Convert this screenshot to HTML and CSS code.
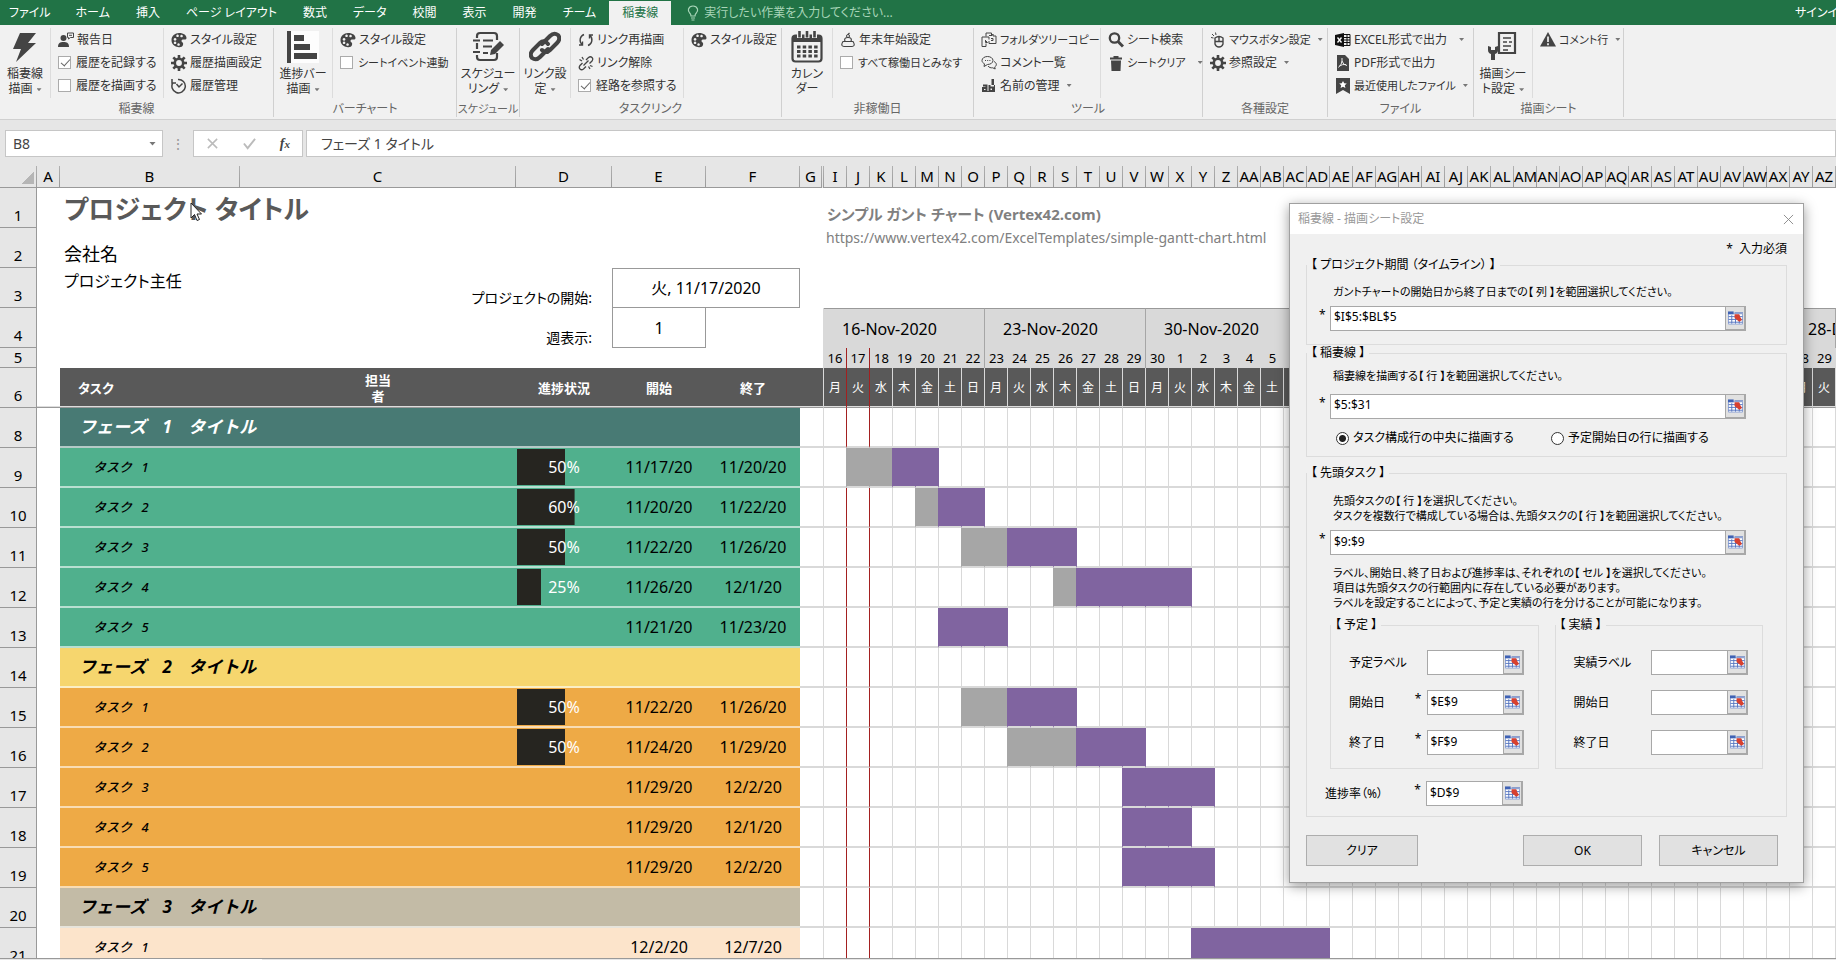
FILE: index.html
```html
<!DOCTYPE html>
<html lang="ja">
<head>
<meta charset="utf-8">
<title>稲妻線 - Excel</title>
<link rel="stylesheet" href="styles.css">
</head>
<body>
<svg class="sprite" aria-hidden="true">
  <symbol id="bolt" viewBox="0 0 32 32"><path d="M11 2h16l-8 10h8L7 31l5-13H4z" fill="#444"/></symbol>
  <symbol id="person" viewBox="0 0 16 16"><circle cx="5.500" cy="6" r="3" fill="#444"/><path d="M0 15c0-4 2-5 5.500-5s5.500 1 5.500 5z" fill="#444"/><path d="M9.500 1h6v4.500h-3L10.500 7V5.500h-1zM11 3.300h3" fill="none" stroke="#444"/></symbol>
  <symbol id="palette" viewBox="0 0 16 16"><path fill-rule="evenodd" d="M8 1c5 0 7.500 2.500 7.500 5 0 2-2 1.500-3.500 1.500S10 9 11 10s1.500 1 1 3-3 2.500-5 2C3 14.500.5 12 .5 8S4 1 8 1zM4 6a1.400 1.400 0 1 0 .1 0zm2.500-3.500a1.300 1.300 0 1 0 .1 0zm4 .2a1.300 1.300 0 1 0 .1 0zM4 9.500a1.300 1.300 0 1 0 .1 0zm3.500 1.700a1.300 1.300 0 1 0 .1 0z" fill="#444"/></symbol>
  <symbol id="gear" viewBox="0 0 16 16"><circle cx="8" cy="8" r="4.200" fill="none" stroke="#444" stroke-width="2.600"/><path d="M8 0v3M8 13v3M0 8h3M13 8h3M2.300 2.300l2.200 2.200M11.500 11.500l2.200 2.200M13.700 2.300l-2.200 2.200M4.500 11.500l-2.200 2.200" stroke="#444" stroke-width="2.600"/></symbol>
  <symbol id="history" viewBox="0 0 16 16"><path d="M2 4.500A6.700 6.700 0 1 0 7 1.500M1 1v4h4M5.500 6l2.500 3 3.500-3.500" fill="none" stroke="#444" stroke-width="1.500"/></symbol>
  <symbol id="bars" viewBox="0 0 32 32"><path d="M4 0h28v32H4z" fill="#fdfdfd"/><path d="M0 0h4v32H0zM7 4h10v6H7zM7 13h16v6H7zM7 22h23v6H7z" fill="#444"/></symbol>
  <symbol id="sheet" viewBox="0 0 32 32"><path d="M5 7V5q0-3 3-3h14q3 0 3 3v4M25 22v4q0 3-3 3H8q-3 0-3-3v-2M5 12v6M1 9.500h7M1 21h7M11 9.500h10M11 15.500h9M11 22h5" fill="none" stroke="#444" stroke-width="2.200"/><path d="M18 24l1-5 9-9 4 4-9 9z" fill="#444"/></symbol>
  <symbol id="link" viewBox="0 0 32 32"><g fill="none" stroke="#444" stroke-width="4" stroke-linecap="round" stroke-linejoin="round"><path d="M13 13l8-8q4-4 8-1 3 4-1 8l-7 7q-4 4-8 0"/><path d="M19 18l-8 8q-4 4-8 1-3-4 1-8l7-7q4-4 8 1"/></g></symbol>
  <symbol id="refresh" viewBox="0 0 16 16"><path d="M6 2.500A6 6 0 0 0 4 12.500M4.500 9.500v3.500H1M10 13.500A6 6 0 0 0 12 3.500M11.500 6.500V3H15" fill="none" stroke="#444" stroke-width="1.400"/></symbol>
  <symbol id="unlink" viewBox="0 0 16 16"><path d="M8 5l2.500-2.500q2-1.500 3.500 0t0 3.500L11.500 8.500M8 11.500L5.500 14q-2 1.500-3.500 0t0-3.500L4.500 8M5.500 10.500l5-5M4 2l1.500 2.500M1.500 4.500L4 6M12 14l-1.500-2.500M14.500 11.500L12 10.500" fill="none" stroke="#444" stroke-width="1.300"/></symbol>
  <symbol id="calendar" viewBox="0 0 32 32"><rect x="1.500" y="4.500" width="29" height="26" rx="3" fill="none" stroke="#444" stroke-width="2.200"/><path d="M1 5h30v6H1z" fill="#444"/><path d="M8.500 1v6M16 1v6M23.500 1v6" stroke="#f1f1f1" stroke-width="5"/><path d="M8.500 0v6.500M16 0v6.500M23.500 0v6.500" stroke="#444" stroke-width="2.600"/><path d="M6 16h21M6 20.500h21M6 25h21" stroke="#444" stroke-width="3" stroke-dasharray="3.500 2.200"/></symbol>
  <symbol id="mochi" viewBox="0 0 16 16"><circle cx="8" cy="4" r="1.500" fill="none" stroke="#444"/><path d="M8 2.500l1.500-1.500M5 9.500q-1.500-4 3-4t3 4zM3 9.500h10q3 4.500-1 5H4q-4-.5-1-5z" fill="none" stroke="#444" stroke-width="1.200"/></symbol>
  <symbol id="folders" viewBox="0 0 16 16"><path d="M5 4.500V1h5.500v2M10.500 1.500v2M5 11.500v3H1V5h7v2.500M8 3.500h3l1-1.500v2h3v7.500H8V9M4.500 8v2.500h2L5 9M10 6.500h2v2h-2" fill="none" stroke="#444"/></symbol>
  <symbol id="chat" viewBox="0 0 16 16"><path d="M6.500 1.500c3 0 5.500 1.700 5.500 4s-2.500 4-5.500 4L3 11.500l.5-2.700C2 8 1 7 1 5.500c0-2.300 2.500-4 5.500-4zM13 6.500c3 1.500 3 4 .7 5.500l.5 2-2.500-1.200c-2 .2-3.700-.3-4.700-1.800M4 5.500h1M6.200 5.500h1M8.400 5.500h1" fill="none" stroke="#444"/></symbol>
  <symbol id="names" viewBox="0 0 16 16"><path d="M2 7.500h3.500V13H2V10h3.500M8.500 7v6H12V9.500H8.500" fill="none" stroke="#444" stroke-width="2"/><path d="M10.500 1h2.500v6h-2.500zM1 14h13V7h-1v6H1z" fill="#444"/></symbol>
  <symbol id="search" viewBox="0 0 16 16"><circle cx="6.500" cy="6" r="4.700" fill="none" stroke="#444" stroke-width="2.300"/><path d="M10 9.500l5 5" stroke="#444" stroke-width="3"/></symbol>
  <symbol id="trash" viewBox="0 0 16 16"><path d="M2 2.500h3.500V1h5v1.500H14v2H2zM3 5.500h10L12.500 16h-9z" fill="#444"/></symbol>
  <symbol id="mouse" viewBox="0 0 16 16"><path d="M5 6q4-3 8 0v6q-1 3-4 3t-4-3zM5 9.500h8M9 4.500v5" fill="none" stroke="#444" stroke-width="1.400"/><path d="M1 5.500l2.500.5M2 2l2 2M5.500.5l.5 2.500" stroke="#444"/></symbol>
  <symbol id="xls" viewBox="0 0 16 16"><path d="M0 3l9-2v14l-9-2z" fill="#111"/><path d="M9 2.500h6v11H9M9 5.500h6M9 8h6M9 10.500h6M12 2.500v11" fill="none" stroke="#111"/><path d="M2.500 5.500l4 5M6.500 5.500l-4 5" stroke="#fff" stroke-width="1.300"/></symbol>
  <symbol id="pdf" viewBox="0 0 16 16"><path d="M2 0h8l4 4v12H2z" fill="#444"/><path d="M7 3v3q0 3-3.500 6.500M7 6q1 4 5 4.500M4.500 11q3-2 6.500-1.500" fill="none" stroke="#eee"/></symbol>
  <symbol id="recent" viewBox="0 0 16 16"><path d="M1 0h14v16l-7-4-7 4z" fill="#444"/><path d="M8 3l1.200 2.300 2.600.3-2 1.700.6 2.700L8 8.700 5.600 10l.6-2.700-2-1.700 2.600-.3z" fill="#fff"/></symbol>
  <symbol id="wrench" viewBox="0 0 32 32"><path d="M12 2h16v20H12z" fill="none" stroke="#444" stroke-width="2.200"/><path d="M16 7h8M16 11h4M22 11h3M16 15h8M16 19h5" stroke="#444" stroke-width="1.700"/><path d="M1 15v4q0 3 3 4v6h4v-6q3-1 3-4v-4l-3 1v3H4v-3z" fill="#444"/></symbol>
  <symbol id="warn" viewBox="0 0 16 16"><path d="M8 0l8 14.500H0z" fill="#444"/><path d="M8 4.500v5.500M8 11.300v1.900" stroke="#f1f1f1" stroke-width="1.700"/></symbol>
  <symbol id="bulb" viewBox="0 0 12 16"><path d="M4 11q0-2-1.500-3.300Q1 6 1.500 4 2.500 1 6 1t4.500 3q.5 2-1 3.700Q8 9 8 11zM4 13h4M4.500 15h3" fill="none" stroke="#a8d5b8" stroke-width="1.200"/></symbol>
  <symbol id="picker" viewBox="0 0 16 14"><path d="M.5 2.500h15v11H.5z" fill="#fff" stroke="#8fa3d4"/><path d="M.5 5.500h15M.5 8.500h15M.5 11.500h15M4 4v9M8 4v9M12 4v9M7 1.500h9" stroke="#5675c0"/><path d="M0 0h6v3H0z" fill="#3f62b5"/><path d="M7 3l5 0 1 3 2 3-3 2-5-4z" fill="#d8402f"/></symbol>
</svg>

<div class="app">
  <nav class="tabs">
    <button class="tab tab-file">ファイル</button><button class="tab">ホーム</button><button class="tab">挿入</button><button class="tab">ページ レイアウト</button><button class="tab">数式</button><button class="tab">データ</button><button class="tab">校閲</button><button class="tab">表示</button><button class="tab">開発</button><button class="tab">チーム</button><button class="tab active">稲妻線</button>
    <label class="tell"><svg class="bulb"><use href="#bulb"/></svg><input type="text" placeholder="実行したい作業を入力してください..."></label>
    <button class="signin">サインイン</button>
  </nav>

  <div class="ribbon">
    <section class="group g-line"><div class="tools">
      <button class="big"><svg><use href="#bolt"/></svg><span>稲妻線<br>描画<i class="dd"></i></span></button>
      <div class="stack w-a"><button class="item"><svg><use href="#person"/></svg>報告日</button><label class="item"><input type="checkbox" checked>履歴を記録する</label><label class="item"><input type="checkbox">履歴を描画する</label></div>
      <div class="stack"><button class="item"><svg><use href="#palette"/></svg>スタイル設定</button><button class="item"><svg><use href="#gear"/></svg>履歴描画設定</button><button class="item"><svg><use href="#history"/></svg>履歴管理</button></div>
    </div><h2>稲妻線</h2></section>
    <section class="group g-bar"><div class="tools">
      <button class="big wide"><svg><use href="#bars"/></svg><span>進捗バー<br>描画<i class="dd"></i></span></button>
      <div class="stack"><button class="item"><svg><use href="#palette"/></svg>スタイル設定</button><label class="item tight"><input type="checkbox">シートイベント連動</label></div>
    </div><h2>バーチャート</h2></section>
    <section class="group g-sched"><div class="tools">
      <button class="big only"><svg><use href="#sheet"/></svg><span>スケジュー<br>リング<i class="dd"></i></span></button>
    </div><h2 class="tight">スケジュール</h2></section>
    <section class="group g-link"><div class="tools">
      <button class="big"><svg><use href="#link"/></svg><span>リンク設<br>定<i class="dd"></i></span></button>
      <div class="stack w-a"><button class="item"><svg><use href="#refresh"/></svg>リンク再描画</button><button class="item"><svg><use href="#unlink"/></svg>リンク解除</button><label class="item"><input type="checkbox" checked>経路を参照する</label></div>
      <div class="stack"><button class="item"><svg><use href="#palette"/></svg>スタイル設定</button></div>
    </div><h2>タスクリンク</h2></section>
    <section class="group g-off"><div class="tools">
      <button class="big"><svg><use href="#calendar"/></svg><span>カレン<br>ダー</span></button>
      <div class="stack"><button class="item"><svg><use href="#mochi"/></svg>年末年始設定</button><label class="item tight"><input type="checkbox">すべて稼働日とみなす</label></div>
    </div><h2>非稼働日</h2></section>
    <section class="group g-tool"><div class="tools">
      <div class="stack w-b"><button class="item tight"><svg><use href="#folders"/></svg>フォルダツリーコピー</button><button class="item"><svg><use href="#chat"/></svg>コメント一覧</button><button class="item"><svg><use href="#names"/></svg>名前の管理<i class="dd"></i></button></div>
      <div class="stack"><button class="item"><svg><use href="#search"/></svg>シート検索</button><button class="item tight"><svg><use href="#trash"/></svg>シートクリア<i class="dd far"></i></button></div>
    </div><h2>ツール</h2></section>
    <section class="group g-conf"><div class="tools">
      <div class="stack"><button class="item tight"><svg><use href="#mouse"/></svg>マウスボタン設定<i class="dd"></i></button><button class="item"><svg><use href="#gear"/></svg>参照設定<i class="dd"></i></button></div>
    </div><h2>各種設定</h2></section>
    <section class="group g-file"><div class="tools">
      <div class="stack"><button class="item"><svg><use href="#xls"/></svg>EXCEL形式で出力<i class="dd far"></i></button><button class="item"><svg><use href="#pdf"/></svg>PDF形式で出力</button><button class="item tight"><svg><use href="#recent"/></svg>最近使用したファイル<i class="dd"></i></button></div>
    </div><h2>ファイル</h2></section>
    <section class="group g-draw"><div class="tools">
      <button class="big wide"><svg><use href="#wrench"/></svg><span>描画シー<br>ト設定<i class="dd"></i></span></button>
      <div class="stack"><button class="item tight"><svg><use href="#warn"/></svg>コメント行<i class="dd"></i></button></div>
    </div><h2>描画シート</h2></section>
  </div>

  <div class="formula">
    <div class="namebox"><input type="text" value="B8" aria-label="名前ボックス"><i class="dd"></i></div>
    <span class="grip">⋮</span>
    <div class="fxbox">
      <button aria-label="キャンセル"><svg viewBox="0 0 14 14"><path d="M2 2l10 10M12 2L2 12" fill="none" stroke="#bbb" stroke-width="1.600"/></svg></button>
      <button aria-label="入力"><svg viewBox="0 0 14 14"><path d="M1 7l4 5 8-10" fill="none" stroke="#bbb" stroke-width="2"/></svg></button>
      <button class="fx"><em>f</em><sub>x</sub></button>
    </div>
    <input class="fbar" type="text" value="フェーズ 1 タイトル" aria-label="数式バー">
  </div>

  <main class="sheet">
    <table>
      <colgroup id="cols"><col class="c-row"><col class="c-a"><col class="c-b"><col class="c-c"><col class="c-d"><col class="c-e"><col class="c-e"><col class="c-g"><col class="c-h"></colgroup>
      <thead><tr id="letters"><th class="corner"></th><th>A</th><th>B</th><th>C</th><th>D</th><th>E</th><th>F</th><th>G</th><th></th></tr></thead>
      <tbody id="rows">
        <tr><th>1</th><td></td><td colspan="7" class="title">プロジェクト タイトル</td><td colspan="44" class="credit">シンプル ガント チャート (Vertex42.com)</td></tr>
        <tr><th>2</th><td></td><td colspan="7" class="company">会社名</td><td colspan="44" class="url"><a href="https://www.vertex42.com/ExcelTemplates/simple-gantt-chart.html">https://www.vertex42.com/ExcelTemplates/simple-gantt-chart.html</a></td></tr>
        <tr><th>3</th><td></td><td class="lead">プロジェクト主任</td><td colspan="2" class="caption">プロジェクトの開始:</td><td colspan="2" class="box first">火, 11/17/2020</td><td colspan="46"></td></tr>
        <tr id="weeks"><th>4</th><td></td><td></td><td colspan="2" class="caption">週表示:</td><td class="box">1</td><td colspan="3"></td></tr>
        <tr id="dates" class="low"><th>5</th><td></td><td colspan="7"></td></tr>
        <tr id="days" class="head"><th>6</th><td class="blank"></td><td class="task-head">タスク</td><td>担当<br>者</td><td>進捗状況</td><td>開始</td><td>終了</td><td colspan="2"></td></tr>
      </tbody>
    </table>
    <svg class="cursor" viewBox="0 0 12 20"><path d="M1 1v15l3.500-3.500L7 18.500l2.500-1L7 12h4.500z" fill="#fff" stroke="#222"/></svg>
  </main>
  <footer class="strip"><span></span></footer>
</div>

<form class="dialog" role="dialog" aria-label="稲妻線 - 描画シート設定">
  <header>稲妻線 - 描画シート設定<button type="button" class="close" aria-label="閉じる"><svg viewBox="0 0 12 12"><path d="M1 1l10 10M11 1L1 11" stroke="#888"/></svg></button></header>
  <div class="body">
    <p class="note">*&nbsp; 入力必須</p>
    <fieldset class="fs1"><legend>【 プロジェクト期間 （タイムライン） 】</legend>
      <label for="p1">ガントチャートの開始日から終了日までの【 列 】を範囲選択してください。</label>
      <div class="line"><b>*</b><div class="ref"><input id="p1" type="text" value="$I$5:$BL$5"><button type="button" aria-label="範囲選択"><svg><use href="#picker"/></svg></button></div></div>
    </fieldset>
    <fieldset class="fs2"><legend>【 稲妻線 】</legend>
      <label for="p2">稲妻線を描画する【 行 】を範囲選択してください。</label>
      <div class="line"><b>*</b><div class="ref"><input id="p2" type="text" value="$5:$31"><button type="button" aria-label="範囲選択"><svg><use href="#picker"/></svg></button></div></div>
      <div class="radios"><label><input type="radio" name="pos" checked>タスク構成行の中央に描画する</label><label><input type="radio" name="pos">予定開始日の行に描画する</label></div>
    </fieldset>
    <fieldset class="fs3"><legend>【 先頭タスク 】</legend>
      <label for="p3">先頭タスクの【 行 】を選択してください。<br>タスクを複数行で構成している場合は、先頭タスクの【 行 】を範囲選択してください。</label>
      <div class="line"><b>*</b><div class="ref"><input id="p3" type="text" value="$9:$9"><button type="button" aria-label="範囲選択"><svg><use href="#picker"/></svg></button></div></div>
      <p class="help">ラベル、開始日、終了日および進捗率は、それぞれの【 セル 】を選択してください。<br>項目は先頭タスクの行範囲内に存在している必要があります。<br>ラベルを設定することによって、予定と実績の行を分けることが可能になります。</p>
      <div class="pair">
        <fieldset><legend>【 予定 】</legend>
          <div class="row"><label for="a1">予定ラベル</label><b></b><div class="ref"><input id="a1" type="text"><button type="button" aria-label="範囲選択"><svg><use href="#picker"/></svg></button></div></div>
          <div class="row"><label for="a2">開始日</label><b>*</b><div class="ref"><input id="a2" type="text" value="$E$9"><button type="button" aria-label="範囲選択"><svg><use href="#picker"/></svg></button></div></div>
          <div class="row"><label for="a3">終了日</label><b>*</b><div class="ref"><input id="a3" type="text" value="$F$9"><button type="button" aria-label="範囲選択"><svg><use href="#picker"/></svg></button></div></div>
        </fieldset>
        <fieldset><legend>【 実績 】</legend>
          <div class="row"><label for="b1">実績ラベル</label><b></b><div class="ref"><input id="b1" type="text"><button type="button" aria-label="範囲選択"><svg><use href="#picker"/></svg></button></div></div>
          <div class="row"><label for="b2">開始日</label><b></b><div class="ref"><input id="b2" type="text"><button type="button" aria-label="範囲選択"><svg><use href="#picker"/></svg></button></div></div>
          <div class="row"><label for="b3">終了日</label><b></b><div class="ref"><input id="b3" type="text"><button type="button" aria-label="範囲選択"><svg><use href="#picker"/></svg></button></div></div>
        </fieldset>
      </div>
      <div class="row rate"><label for="r1">進捗率（%）</label><b>*</b><div class="ref"><input id="r1" type="text" value="$D$9"><button type="button" aria-label="範囲選択"><svg><use href="#picker"/></svg></button></div></div>
    </fieldset>
    <div class="actions"><button type="button">クリア</button><button type="button" class="ok">OK</button><button type="button">キャンセル</button></div>
  </div>
</form>
<script src="sheet.js"></script>
</body>
</html>
```

FILE: styles.css
```css
* { box-sizing: border-box; }
body {
  margin: 0;
  font: 12px/16px "Noto Sans", "Noto Sans CJK JP", sans-serif;
  font-feature-settings: "palt";
  color: #000;
  overflow: hidden;
}
button, input { font: inherit; font-feature-settings: inherit; color: inherit; border: 0; background: none; padding: 0; margin: 0; }
.sprite { display: none; }
.app { display: flex; flex-direction: column; height: 100vh; overflow: hidden; background: #e6e6e6; }

/* Tabs */
.tabs { display: flex; height: 25px; flex: none; background: #217346; color: #fff; }
.tab { padding: 0 13px; white-space: nowrap; }
.tab-file { padding: 0 12px 0 9px; }
.tab.active { background: #f1f1f1; color: #217346; margin-top: 1px; }
.tell { display: flex; align-items: center; gap: 5px; margin-left: 16px; color: #a8d5b8; }
.bulb { width: 12px; height: 16px; }
.tell input { width: 260px; }
.tell input::placeholder { color: #a8d5b8; opacity: 1; }
.signin { margin-left: auto; width: 41px; overflow: hidden; text-align: left; white-space: nowrap; }

/* Ribbon */
.ribbon { display: flex; flex: none; background: #f1f1f1; border-bottom: 1px solid #d0d0d0; color: #333; padding: 3px 0 2px; }
.group { display: flex; flex-direction: column; flex: none; border-right: 1px solid #d0d0d0; }
.g-line { width: 274px; }
.g-bar { width: 183px; }
.g-sched { width: 63px; }
.g-link { width: 262px; }
.g-off { width: 192px; }
.g-tool { width: 229px; }
.g-conf { width: 125px; }
.g-file { width: 146px; }
.g-draw { width: 150px; }
.tools { display: flex; height: 70px; }
.group h2 { margin: 3px 0 0; font-size: 12px; line-height: 16px; font-weight: normal; text-align: center; color: #666; white-space: nowrap; }
.group h2.tight, .item.tight { font-size: 11px; }
.big { width: 50px; display: flex; flex-direction: column; align-items: center; gap: 3px; padding-top: 3px; line-height: 15px; white-space: nowrap; flex: none; }
.big.wide { width: 58px; }
.big.only { width: 62px; }
.big svg { width: 32px; height: 32px; flex: none; }
.stack { padding-left: 7px; }
.big + .stack, .stack + .stack { border-left: 1px solid #dcdcdc; }
.w-a { width: 113px; flex: none; }
.w-b { width: 126px; flex: none; }
.item { display: flex; align-items: center; gap: 3px; height: 23px; white-space: nowrap; }
.item svg { width: 16px; height: 16px; flex: none; }
.item input { appearance: none; width: 13px; height: 13px; flex: none; border: 1px solid #ababab; background: #fff; margin-right: 2px; }
.item input:checked::before { content: ""; display: block; width: 4px; height: 8px; margin: 0 0 0 4px; border: solid #666; border-width: 0 1px 1px 0; rotate: 42deg; }
.dd { display: inline-block; width: 5px; height: 3px; margin-left: 4px; background: #777; clip-path: polygon(0 0, 100% 0, 50% 100%); vertical-align: middle; }
.dd.far { margin-left: 9px; }

/* Formula bar */
.formula { display: flex; flex: none; align-items: stretch; height: 37px; padding: 10px 0 0 5px; color: #444; font-size: 14px; }
.namebox { display: flex; align-items: center; width: 158px; background: #fff; border: 1px solid #c6c6c6; padding: 0 6px 0 7px; }
.namebox input { flex: 1; min-width: 0; }
.namebox .dd { width: 7px; height: 4px; }
.grip { width: 30px; text-align: center; line-height: 27px; color: #999; }
.fxbox { display: flex; align-items: center; justify-content: space-around; width: 110px; background: #fff; border: 1px solid #c6c6c6; margin-right: 3px; }
.fxbox svg { width: 13px; height: 13px; display: block; }
.fx { font-family: "Liberation Serif", serif; font-weight: bold; line-height: 16px; }
.fx sub { font-size: 11px; font-style: italic; vertical-align: baseline; }
.fbar { flex: 1; background: #fff; border: 1px solid #c6c6c6; padding-left: 14px; }

/* Sheet */
.sheet { position: relative; flex: 1; min-height: 0; overflow: hidden; background: #fff; }
table { table-layout: fixed; width: 0; border-collapse: separate; border-spacing: 0; font-size: 16px; line-height: 20px; }
.c-row { width: 37px; }
.c-a { width: 23px; }
.c-b { width: 180px; }
.c-c { width: 276px; }
.c-d { width: 96px; }
.c-e { width: 94px; }
.c-g { width: 22px; }
.c-h { width: 2px; }
.c-day { width: 23px; }
th, td { padding: 0; white-space: nowrap; }
th { font-weight: normal; font-size: 15px; background: #e6e6e6; }
thead th { height: 31px; padding-top: 9px; line-height: 21px; border-bottom: 1px solid #999; border-right: 1px solid; border-image: linear-gradient(#e6e6e6 30%, #b0b0b0 32%, #999) 1; }
thead .corner { background: linear-gradient(135deg, #e6e6e6 50%, #b5b5b5 50%) 22px 15px / 12px 12px no-repeat #e6e6e6; }
tbody th { height: 40px; vertical-align: bottom; line-height: 24px; border-right: 1px solid #999; border-bottom: 1px solid #999; }
.low th { height: 20px; line-height: 19px; }
.title { padding: 3px 0 0 4px; font-size: 26px; line-height: 36px; font-weight: bold; color: #595959; vertical-align: top; }
.credit { font-size: 15px; font-weight: bold; color: #808080; padding: 12px 0 0 3px; }
.company { padding: 12px 0 0 4px; font-size: 18px; font-feature-settings: normal; }
.url { padding-left: 2px; vertical-align: top; font-size: 14px; }
.url a { color: #808080; text-decoration: none; }
.lead { padding-left: 4px; font-size: 16px; line-height: 26px; vertical-align: top; }
.caption { text-align: right; vertical-align: bottom; padding-right: 20px; font-size: 14px; }
.box { text-align: center; border: 1px solid #999; border-top: 0; background: #fff; }
.box.first { border-top: 1px solid #999; }
.week { background: #d9d9d9; border-top: 1px solid #999; border-right: 1px solid #a6a6a6; padding-left: 18px; overflow: hidden; }
.date { background: #d9d9d9; font-size: 13px; line-height: 18px; text-align: center; }
.date.sunday { border-right: 1px solid #a6a6a6; }
.head td { background: #595959; color: #fff; text-align: center; font-size: 13px; line-height: 16px; font-weight: bold; border-bottom: 1px solid #999; box-shadow: inset 0 -1px #ddd; }
.head td.blank { background: #fff; }
.head td.task-head { text-align: left; padding-left: 18px; }
.head td.day { font-weight: normal; font-size: 12px; border-right: 1px solid #d9d9d9; }
.g { border-right: 1px solid #d9d9d9; border-bottom: 2px solid #d9d9d9; }
.gap { border-bottom: 2px solid #d9d9d9; }
.edge { border-right: 1px solid #d9d9d9; }
.g.done { background: #a6a6a6; background-clip: padding-box; }
.g.todo { background: #8064a0; background-clip: padding-box; }
.r-red, .date.r-red, .head td.r-red { border-right: 1px solid #a32020; }
.g.r-done { border-right-color: #a6a6a6; }
.g.r-todo { border-right-color: #8064a0; }
.fill { border-bottom: 2px solid rgba(255, 255, 255, .6); text-align: center; }
.phase1 .fill { background-color: #487a74; color: #fff; }
.task1 .fill { background-color: #50b08d; }
.phase2 .fill { background-color: #f6d66e; }
.task2 .fill { background-color: #eeaa46; }
.phase3 .fill { background-color: #c3bba6; }
.task3 .fill { background-color: #fce4cb; }
.fill.name { text-align: left; padding-left: 33px; font-size: 13px; font-style: italic; font-weight: 500; font-feature-settings: normal; }
.fill.phase { text-align: left; padding-left: 19px; font-size: 17px; font-style: italic; font-weight: bold; font-feature-settings: normal; }
.name span { margin: 0 6px; }
.phase span { margin: 0 12px; }
.fill.pct { color: #fff; background-image: linear-gradient(#262520, #262520); background-position: 1px 1px; background-size: var(--done) 36px; background-repeat: no-repeat; }
.cursor { position: absolute; left: 190px; top: 45px; width: 12px; height: 20px; }
.strip { height: 2px; flex: none; border-top: 1px solid #999; background: #e6e6e6; padding-left: 100px; }
.strip span { display: block; width: 162px; height: 1px; background: #fff; }

/* Dialog */
.dialog { position: absolute; top: 203px; right: 32px; width: 515px; background: #f0f0f0; border: 1px solid #a0a0a0; box-shadow: 0 3px 12px rgba(0, 0, 0, .4); }
.dialog header { display: flex; align-items: center; justify-content: space-between; height: 30px; padding: 0 9px 0 8px; background: #fff; color: #999; }
.close svg { width: 11px; height: 11px; display: block; }
.body { padding: 7px 16px 16px; }
.body p { margin: 0; }
.note { text-align: right; }
fieldset { margin: 0; border: 1px solid #dcdcdc; min-width: 0; padding: 0; }
legend { padding: 0 4px; height: 16px; white-space: nowrap; }
.fs1 > label, .fs2 > label, .fs3 > label, .help { display: block; padding-left: 26px; font-size: 11px; white-space: nowrap; }
.fs1 { padding: 11px 40px 13px 0; }
.fs1 .line { margin-top: 6px; }
.fs2 { padding: 7px 40px 10px 0; }
.fs2 .line { margin-top: 10px; }
.fs3 { margin-top: 8px; padding: 12px 40px 10px 0; line-height: 15px; }
.fs3 .line { margin-top: 7px; }
.line { display: flex; padding-left: 12px; }
b { font-weight: normal; width: 11px; flex: none; line-height: 18px; }
.ref { display: flex; flex: 1; height: 25px; border: 1px solid #a8a8a8; background: #fff; }
.ref input { flex: 1; min-width: 0; padding: 0 3px 3px; outline: 0; }
.ref button { width: 20px; flex: none; display: grid; place-items: center; background: #e1e1e1; border: 1px solid #a8a8a8; border-width: 0 1px 1px 1px; }
.ref svg { width: 15px; height: 14px; }
.radios { display: flex; margin-top: 11px; padding-left: 29px; font-size: 12px; }
.radios label { display: flex; align-items: center; gap: 4px; flex: none; width: 215px; white-space: nowrap; }
.radios label + label { width: auto; }
.radios input { appearance: none; width: 13px; height: 13px; border: 1px solid #333; border-radius: 50%; background: #fff; flex: none; }
.radios input:checked { background: radial-gradient(circle, #222 3px, #fff 4px); }
.body .help { margin-top: 10px; }
.pair { display: grid; grid-template-columns: 1fr 1fr; gap: 16px; margin: 7px -17px 0 23px; }
.pair fieldset { padding: 17px 14px 13px 0; }
.pair .row { padding-left: 18px; }
.pair .row + .row { margin-top: 15px; }
.row { display: flex; }
.row label { flex: 1; line-height: 25px; white-space: nowrap; }
.row b { width: 17px; text-align: center; }
.row .ref { flex: 0 0 97px; min-width: 0; }
.rate { margin-top: 12px; padding-left: 18px; width: 216px; }
.actions { display: flex; gap: 17px; margin-top: 18px; padding-right: 9px; }
.actions button { width: 119px; height: 31px; background: #e1e1e1; border: 1px solid #adadad; }
.actions button:first-child { width: 112px; margin-right: auto; }
```

FILE: sheet.js
```js
const DAYS = 44;
const WEEKDAYS = ['月', '火', '水', '木', '金', '土', '日'];
const byId = (id) => document.getElementById(id);

function add(parent, tag, text, cls, span) {
  const el = document.createElement(tag);
  if (text) el.textContent = text;
  if (cls) el.className = cls;
  if (span) el.colSpan = span;
  parent.appendChild(el);
  return el;
}

function letter(n) {
  return n < 26 ? String.fromCharCode(65 + n) : 'A' + String.fromCharCode(65 + n - 26);
}

// Today is the second day of the chart; its cell is framed by two red lines.
const red = (i) => (i === 0 || i === 1 ? ' r-red' : '');

byId('weeks').lastElementChild.classList.add('edge');
byId('dates').lastElementChild.classList.add('edge');
byId('days').lastElementChild.classList.add('edge');

for (let i = 0; i < DAYS; i++) {
  add(byId('cols'), 'col', '', 'c-day');
  add(byId('letters'), 'th', letter(i + 8));
  const date = new Date(2020, 10, 16 + i);
  const month = date.getMonth() === 10 ? 'Nov' : 'Dec';
  if (i % 7 === 0) {
    add(byId('weeks'), 'td', `${date.getDate()}-${month}-2020`, 'week', Math.min(7, DAYS - i));
  }
  add(byId('dates'), 'td', String(date.getDate()), 'date' + (i % 7 === 6 ? ' sunday' : '') + red(i));
  add(byId('days'), 'td', WEEKDAYS[i % 7], 'day' + red(i));
}

// [row class, name, number, percent, start, end, first day, completed days, last day]
const ROWS = [
  ['phase1', 'フェーズ', 1],
  ['task1', 'タスク', 1, 50, '11/17/20', '11/20/20', 1, 2, 4],
  ['task1', 'タスク', 2, 60, '11/20/20', '11/22/20', 4, 1, 6],
  ['task1', 'タスク', 3, 50, '11/22/20', '11/26/20', 6, 2, 10],
  ['task1', 'タスク', 4, 25, '11/26/20', '12/1/20', 10, 1, 15],
  ['task1', 'タスク', 5, 0, '11/21/20', '11/23/20', 5, 0, 7],
  ['phase2', 'フェーズ', 2],
  ['task2', 'タスク', 1, 50, '11/22/20', '11/26/20', 6, 2, 10],
  ['task2', 'タスク', 2, 50, '11/24/20', '11/29/20', 8, 3, 13],
  ['task2', 'タスク', 3, 0, '11/29/20', '12/2/20', 13, 0, 16],
  ['task2', 'タスク', 4, 0, '11/29/20', '12/1/20', 13, 0, 15],
  ['task2', 'タスク', 5, 0, '11/29/20', '12/2/20', 13, 0, 16],
  ['phase3', 'フェーズ', 3],
  ['task3', 'タスク', 1, 0, '12/2/20', '12/7/20', 16, 0, 21],
];

ROWS.forEach(([cls, name, num, pct, start, end, from, done, to], r) => {
  const tr = add(byId('rows'), 'tr', '', cls);
  add(tr, 'th', String(r + 8));
  add(tr, 'td');
  const isPhase = cls.startsWith('phase');
  const label = add(tr, 'td', '', 'fill ' + (isPhase ? 'phase' : 'name'));
  label.append(name + ' ');
  add(label, 'span', String(num));
  if (isPhase) label.append(' タイトル');
  add(tr, 'td', '', 'fill');
  const progress = add(tr, 'td', pct ? pct + '%' : '', 'fill' + (pct ? ' pct' : ''));
  if (pct) progress.style.setProperty('--done', pct + '%');
  add(tr, 'td', start, 'fill');
  add(tr, 'td', end, 'fill');
  add(tr, 'td', '', 'gap edge', 2);
  const state = (i) => (i < from || i > to || from === undefined ? '' : i < from + done ? 'done' : 'todo');
  for (let i = 0; i < DAYS; i++) {
    const border = state(i + 1) || state(i);
    add(tr, 'td', '', 'g ' + state(i) + (border ? ' r-' + border : red(i)));
  }
});
```
